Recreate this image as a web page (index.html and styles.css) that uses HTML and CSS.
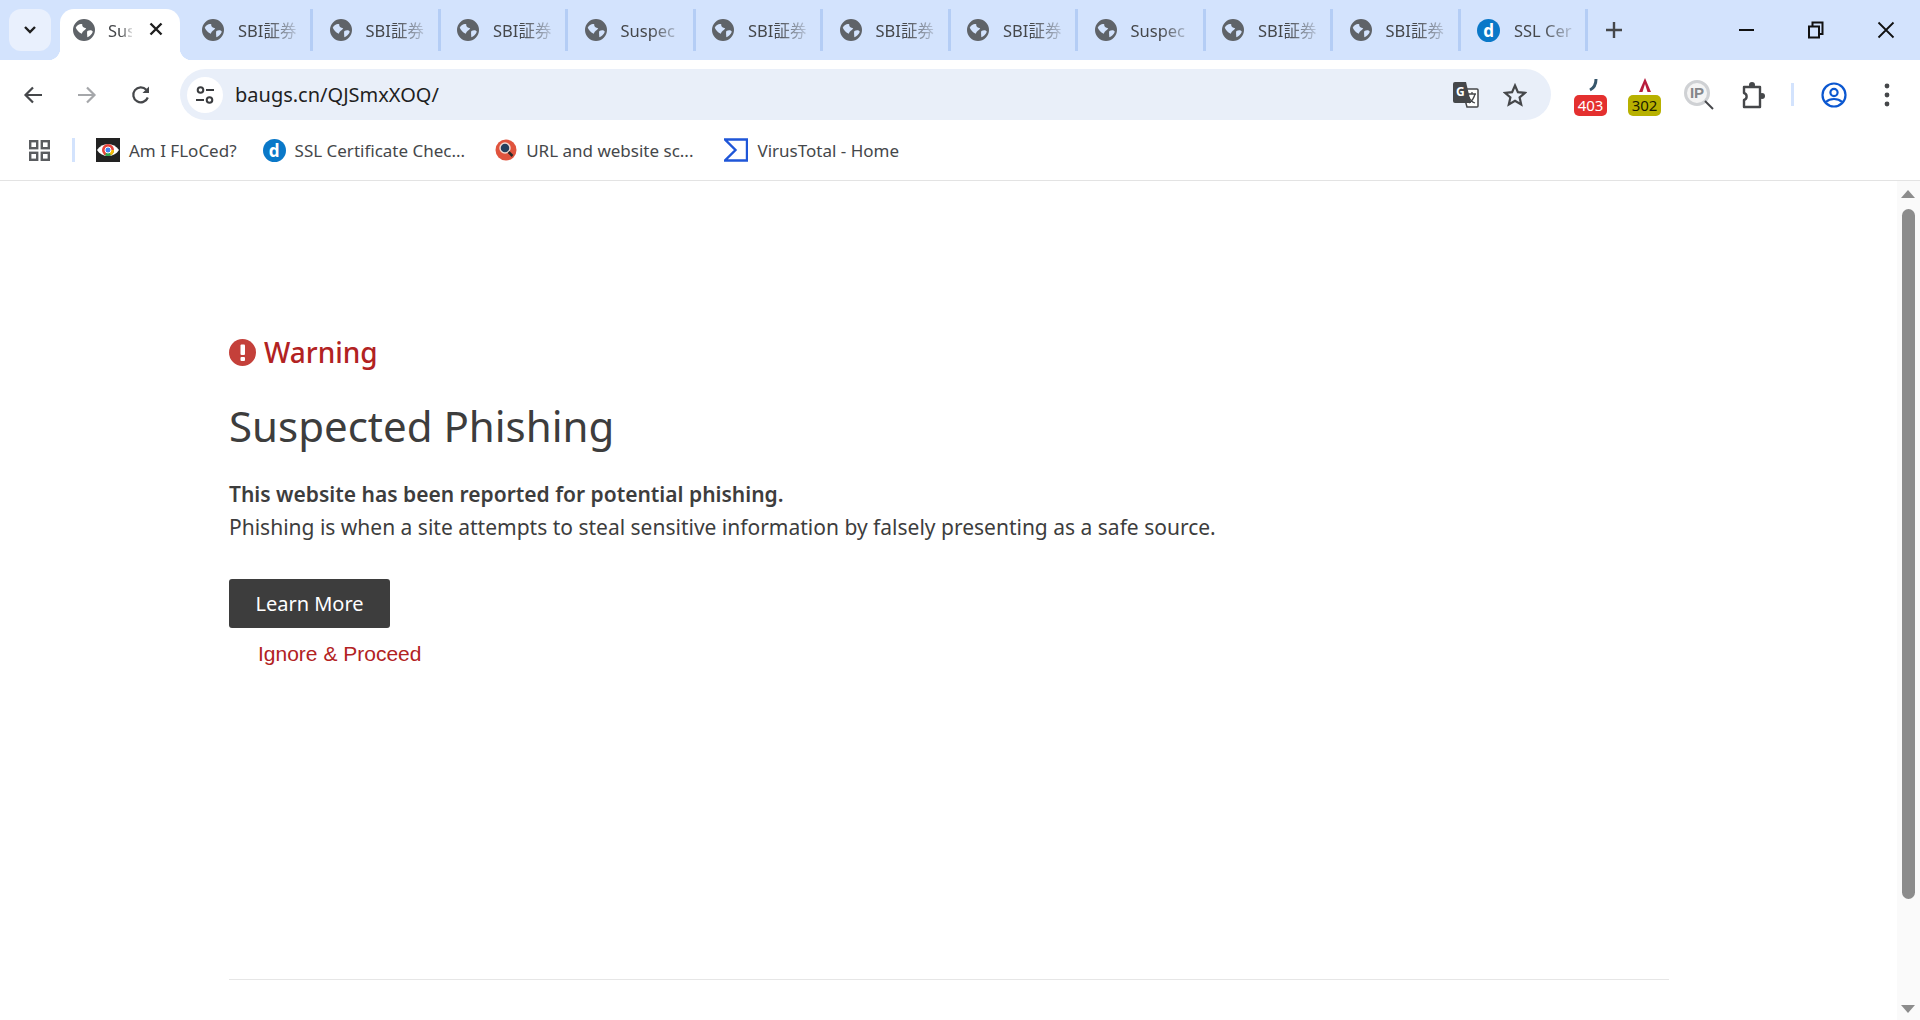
FILE: index.html
```html
<!DOCTYPE html>
<html lang="en">
<head>
    <meta charset="UTF-8">
    <title>Suspected Phishing</title>
    <link rel="stylesheet" href="styles.css">
</head>
<body>

<!-- Shared icons -->
<svg class="defs" width="0" height="0">
    <symbol id="globe" viewBox="0 0 20 20">
        <path fill-rule="evenodd" d="M10 0a10 10 0 1 0 0 20a10 10 0 0 0 0-20zM2.500 8C4 5 7 4 8.500 5C8 7 10 8 12 8.500C11 10.500 8.500 11 8 13.500C5.500 12.500 3.500 10 2.500 8zM13 11C15 10 17 10 18 11.500C17 14 15 16 13 16.500C13 14.500 12.500 13 13 11z"/>
    </symbol>
</svg>

<!-- Tab strip -->
<div class="tabstrip">
    <div class="tab-search">
        <svg width="14" height="10" viewBox="0 0 14 10"><path d="M2 2l5 5 5-5" fill="none" stroke="#1f1f1f" stroke-width="2.400"/></svg>
    </div>
    <div class="tab active">
        <svg class="favicon"><use href="#globe"/></svg>
        <span class="tab-title short">Sus</span>
        <svg class="tab-close" width="14" height="14" viewBox="0 0 14 14"><path d="M1.500 1.500l11 11M12.500 1.500l-11 11" stroke="#1f1f1f" stroke-width="2.400"/></svg>
    </div>
    <div class="tab"><svg class="favicon"><use href="#globe"/></svg><span class="tab-title">SBI証券</span></div>
    <div class="tab"><svg class="favicon"><use href="#globe"/></svg><span class="tab-title">SBI証券</span></div>
    <div class="tab"><svg class="favicon"><use href="#globe"/></svg><span class="tab-title">SBI証券</span></div>
    <div class="tab"><svg class="favicon"><use href="#globe"/></svg><span class="tab-title">Suspec</span></div>
    <div class="tab"><svg class="favicon"><use href="#globe"/></svg><span class="tab-title">SBI証券</span></div>
    <div class="tab"><svg class="favicon"><use href="#globe"/></svg><span class="tab-title">SBI証券</span></div>
    <div class="tab"><svg class="favicon"><use href="#globe"/></svg><span class="tab-title">SBI証券</span></div>
    <div class="tab"><svg class="favicon"><use href="#globe"/></svg><span class="tab-title">Suspec</span></div>
    <div class="tab"><svg class="favicon"><use href="#globe"/></svg><span class="tab-title">SBI証券</span></div>
    <div class="tab"><svg class="favicon"><use href="#globe"/></svg><span class="tab-title">SBI証券</span></div>
    <div class="tab"><span class="d-icon">d</span><span class="tab-title">SSL Cer</span></div>
    <svg class="new-tab" width="18" height="18" viewBox="0 0 18 18"><path d="M9 1v16M1 9h16" stroke="#45474a" stroke-width="2.400"/></svg>
    <div class="window-controls">
        <svg width="16" height="16" viewBox="0 0 16 16"><path d="M0 8h15" stroke="#111" stroke-width="2"/></svg>
        <svg width="16" height="18" viewBox="0 0 16 18"><path d="M1 5.500h10v11H1zM4.500 5V1.500h10V13H11" fill="none" stroke="#111" stroke-width="2"/></svg>
        <svg width="18" height="18" viewBox="0 0 18 18"><path d="M1.500 1.500l15 15M16.500 1.500l-15 15" stroke="#111" stroke-width="1.800"/></svg>
    </div>
</div>

<!-- Toolbar -->
<div class="toolbar">
    <div class="nav-buttons">
        <svg width="20" height="20" viewBox="0 0 20 20"><path d="M19 10H3M10 2.500L2.500 10l7.500 7.500" fill="none" stroke="#45474a" stroke-width="2.200"/></svg>
        <svg width="20" height="20" viewBox="0 0 20 20"><path d="M1 10h16M10 2.500l7.500 7.500-7.500 7.500" fill="none" stroke="#a5a7aa" stroke-width="2.200"/></svg>
        <svg width="20" height="20" viewBox="0 0 20 20"><path d="M16.800 12.500A7.500 7.500 0 1 1 15.300 4.700" fill="none" stroke="#45474a" stroke-width="2.200"/><path d="M18 1.500V8h-6.500z" fill="#45474a"/></svg>
    </div>
    <div class="omnibox">
        <div class="site-info">
            <svg width="20" height="20" viewBox="0 0 20 20" fill="none" stroke="#3a3c3f" stroke-width="2"><circle cx="5.500" cy="5" r="2.800"/><path d="M11 5h8M1 15h8"/><circle cx="14.500" cy="15" r="2.800"/></svg>
        </div>
        <span class="url">baugs.cn/QJSmxXOQ/</span>
        <svg class="translate-icon" width="26" height="26" viewBox="0 0 26 26">
            <path d="M9 7h15a1 1 0 0 1 1 1v16a1 1 0 0 1-1 1H14z" fill="#fff" stroke="#45474a" stroke-width="1.500"/>
            <path d="M2 0h11l5 21H2a2 2 0 0 1-2-2V2a2 2 0 0 1 2-2z" fill="#45474a"/>
            <text x="3" y="14" class="translate-g">G</text>
            <path d="M15 12h8M19 10v2M22 12c-1 4-3 7-6 9M16 15c1 3 3 5 6 6" fill="none" stroke="#45474a" stroke-width="1.300"/>
        </svg>
        <svg class="star-icon" width="24" height="24" viewBox="0 0 24 24"><path d="M12 2.500l2.900 6.600 7.100.7-5.400 4.700 1.600 7-6.200-3.700-6.200 3.700 1.600-7L2 9.800l7.100-.7z" fill="none" stroke="#45474a" stroke-width="2.200"/></svg>
    </div>
    <div class="extensions">
        <div class="ext-badge">
            <svg class="ext-top" width="20" height="14" viewBox="0 0 20 14"><path d="M9 12c4-2 6-6 6-11" fill="none" stroke="#36566b" stroke-width="3"/></svg>
            <span class="badge red">403</span>
        </div>
        <div class="ext-badge">
            <svg class="ext-top" width="20" height="14" viewBox="0 0 20 14"><path d="M10 0l6 14H4z" fill="#b71c3c"/><path d="M10 6l2.500 8h-5z" fill="#fff"/></svg>
            <span class="badge olive">302</span>
        </div>
        <div class="ip-icon">
            <span class="ip-text">IP</span>
            <svg class="ip-glass" width="10" height="10" viewBox="0 0 10 10"><path d="M1 1l8 8" stroke="#45474a" stroke-width="2"/></svg>
        </div>
        <svg class="puzzle" width="26" height="28" viewBox="0 0 26 28"><path d="M3 6h16v20H3v-7c3.500-1 3.500-6 0-7z" fill="none" stroke="#45474a" stroke-width="2.400" stroke-linejoin="round"/><circle cx="11" cy="4" r="3" fill="#45474a"/><circle cx="21" cy="15" r="3" fill="#45474a"/></svg>
        <div class="toolbar-sep"></div>
        <svg class="profile" width="26" height="26" viewBox="0 0 26 26" fill="none" stroke="#0b57d0" stroke-width="2.200"><circle cx="13" cy="13" r="11.500"/><circle cx="13" cy="10.500" r="3.600"/><path d="M5 20c4-4 12-4 16 0"/></svg>
        <svg class="dots" width="6" height="26" viewBox="0 0 6 26" fill="#45474a"><circle cx="3" cy="4" r="2.400"/><circle cx="3" cy="13" r="2.400"/><circle cx="3" cy="22" r="2.400"/></svg>
    </div>
</div>

<!-- Bookmarks bar -->
<div class="bookmarks">
    <svg class="apps" width="21" height="21" viewBox="0 0 21 21" fill="none" stroke="#5a5c5f" stroke-width="2.400"><rect x="1.200" y="1.200" width="7" height="7"/><rect x="12.800" y="1.200" width="7" height="7"/><rect x="1.200" y="12.800" width="7" height="7"/><rect x="12.800" y="12.800" width="7" height="7"/></svg>
    <div class="bookmark-sep"></div>
    <div class="bookmark floc">
        <svg width="24" height="24" viewBox="0 0 24 24"><rect width="24" height="24" fill="#222"/><path d="M1 12c5-8 17-8 22 0-5 8-17 8-22 0z" fill="#fff"/><circle cx="12" cy="12" r="6" fill="#e8453c"/><path d="M12 12l6 0a6 6 0 0 1-9 5.200z" fill="#34a853"/><path d="M12 12h6a6 6 0 0 1-3 5.200z" fill="#fbbc05"/><circle cx="12" cy="12" r="3" fill="#4285f4" stroke="#fff"/></svg>
        <span>Am I FLoCed?</span>
    </div>
    <div class="bookmark ssl">
        <span class="d-icon">d</span>
        <span>SSL Certificate Chec...</span>
    </div>
    <div class="bookmark urlscan">
        <svg width="22" height="24" viewBox="0 0 22 24"><circle cx="11" cy="12" r="10.500" fill="#e0533d"/><circle cx="10" cy="10" r="5" fill="#24405f" stroke="#f2d9d0" stroke-width="1.500"/><path d="M13.500 14l4 4" stroke="#2a2a2a" stroke-width="2.500"/></svg>
        <span>URL and website sc...</span>
    </div>
    <div class="bookmark vt">
        <svg width="24" height="24" viewBox="0 0 24 24"><path d="M1 1.500h22v21H1L11.500 12z" fill="none" stroke="#1f56d8" stroke-width="2.400"/></svg>
        <span>VirusTotal - Home</span>
    </div>
</div>

<!-- Page -->
<div class="viewport">
    <div class="page">
        <div class="warning">
            <svg width="27" height="27" viewBox="0 0 27 27"><circle cx="13.500" cy="13.500" r="13.500" fill="#c4403a"/><rect x="11.500" y="5.500" width="4.500" height="10.500" rx="1" fill="#fff"/><rect x="11.500" y="18" width="4.500" height="4" rx="1" fill="#fff"/></svg>
            <span>Warning</span>
        </div>
        <h1>Suspected Phishing</h1>
        <p class="lead"><strong>This website has been reported for potential phishing.</strong></p>
        <p class="desc">Phishing is when a site attempts to steal sensitive information by falsely presenting as a safe source.</p>
        <button class="learn-more">Learn More</button>
        <a class="proceed" href="#">Ignore &amp; Proceed</a>
        <hr class="rule">
    </div>
    <div class="scrollbar">
        <div class="arrow-up"></div>
        <div class="thumb"></div>
        <div class="arrow-down"></div>
    </div>
</div>

</body>
</html>
```

FILE: styles.css
```css
* {
    box-sizing: border-box;
}
html, body {
    height: 100%;
}
body {
    margin: 0;
    display: flex;
    flex-direction: column;
    overflow: hidden;
    background-color: #ffffff;
    font-family: "Noto Sans", "Noto Sans CJK JP", sans-serif;
    color: #3d3d3d;
}
.defs {
    position: absolute;
}

/* Tab strip */
.tabstrip {
    display: flex;
    align-items: flex-end;
    height: 60px;
    padding-left: 9px;
    background-color: #d3e3fd;
}
.tab-search {
    display: flex;
    align-items: center;
    justify-content: center;
    width: 42px;
    height: 42px;
    margin: 0 9px 9px 0;
    border-radius: 12px;
    background-color: #e9f0fd;
}
.tab {
    display: flex;
    align-items: center;
    flex: none;
    width: 127.5px;
    height: 42px;
    margin-bottom: 9px;
    padding-left: 16.5px;
    border-right: 3px solid #b4cdf5;
}
.tab.active {
    position: relative;
    width: 120px;
    height: 51px;
    margin: 0 5.5px 0 0;
    padding: 0 0 9px 13px;
    border-right: none;
    border-radius: 14px 14px 0 0;
    background-color: #ffffff;
}
.tab.active:before,
.tab.active:after {
    content: '';
    position: absolute;
    bottom: 0;
    width: 12px;
    height: 12px;
}
.tab.active:before {
    left: -12px;
    background: radial-gradient(circle at 0 0, #d3e3fd 12px, #ffffff 12.500px);
}
.tab.active:after {
    right: -12px;
    background: radial-gradient(circle at 100% 0, #d3e3fd 12px, #ffffff 12.500px);
}
.favicon {
    flex: none;
    width: 22px;
    height: 22px;
    fill: #5f6368;
}
.d-icon {
    display: flex;
    flex: none;
    align-items: center;
    justify-content: center;
    width: 23px;
    height: 23px;
    border-radius: 50%;
    background-color: #0a78c8;
    color: #ffffff;
    font-size: 17px;
    font-weight: 700;
    line-height: 1;
}
.tab-title {
    width: 58px;
    margin-left: 14px;
    color: #45474a;
    font-size: 16.500px;
    white-space: nowrap;
    -webkit-mask-image: linear-gradient(to right, #000 50%, rgba(0, 0, 0, 0.2) 100%);
    mask-image: linear-gradient(to right, #000 50%, rgba(0, 0, 0, 0.2) 100%);
}
.tab-title.short {
    width: 24px;
    margin-left: 13px;
}
.tab-close {
    position: absolute;
    top: 13px;
    left: 89px;
}
.new-tab {
    margin: 0 0 21px 17px;
}
.window-controls {
    display: flex;
    align-items: center;
    gap: 53px;
    margin: 0 25px 21px auto;
}

/* Toolbar */
.toolbar {
    display: flex;
    align-items: center;
    flex: none;
    height: 60px;
    padding-top: 9px;
    border-radius: 14px 14px 0 0;
    background-color: #ffffff;
}
.nav-buttons {
    display: flex;
    align-items: center;
    gap: 34px;
    width: 180px;
    padding-left: 23px;
}
.omnibox {
    display: flex;
    align-items: center;
    width: 1371px;
    height: 51px;
    padding: 0 24px 0 7px;
    border-radius: 26px;
    background-color: #e9eff9;
}
.site-info {
    display: flex;
    align-items: center;
    justify-content: center;
    width: 36px;
    height: 36px;
    border-radius: 50%;
    background-color: #ffffff;
}
.url {
    margin-left: 12px;
    color: #1f1f1f;
    font-size: 20px;
}
.translate-icon {
    margin-left: auto;
}
.translate-g {
    fill: #ffffff;
    font-size: 12px;
    font-weight: 700;
}
.star-icon {
    margin-left: 24px;
}
.extensions {
    display: flex;
    align-items: center;
    flex: 1;
    height: 51px;
}
.ext-badge {
    position: relative;
    width: 33px;
    height: 36px;
    margin: 6px 21px 0 0;
}
.ext-badge:first-child {
    margin-left: 23px;
}
.ext-top {
    position: absolute;
    top: -2px;
    left: 7px;
}
.badge {
    position: absolute;
    bottom: 0;
    left: 0;
    width: 33px;
    height: 21px;
    border-radius: 5px;
    font-size: 15px;
    line-height: 21px;
    text-align: center;
}
.badge.red {
    background-color: #e4302f;
    color: #ffffff;
}
.badge.olive {
    background-color: #b8b100;
    color: #1c1c00;
}
.ip-icon {
    position: relative;
    width: 26px;
    height: 26px;
    margin: -3px 0 0 2px;
    border: 3px solid #cfd1d4;
    border-radius: 50%;
    background-color: #f4f4f4;
}
.ip-text {
    display: block;
    color: #85878a;
    font-family: "Liberation Sans", Arial, sans-serif;
    font-size: 15px;
    font-weight: 700;
    line-height: 20px;
    text-align: center;
}
.ip-glass {
    position: absolute;
    right: -7px;
    bottom: -7px;
}
.puzzle {
    margin-left: 31px;
}
.toolbar-sep {
    width: 3px;
    height: 23px;
    margin-left: 24px;
    background-color: #d3e3fd;
}
.profile {
    margin-left: 27px;
}
.dots {
    margin-left: 37px;
}

/* Bookmarks bar */
.bookmarks {
    display: flex;
    align-items: center;
    flex: none;
    height: 61px;
    padding-left: 29px;
    border-bottom: 1px solid #e3e3e3;
    background-color: #ffffff;
}
.bookmark-sep {
    width: 3px;
    height: 24px;
    margin: 0 21px 0 22px;
    background-color: #d3e3fd;
}
.bookmark {
    display: flex;
    align-items: center;
    gap: 9px;
    color: #45474a;
    font-size: 17px;
    white-space: nowrap;
}
.ssl {
    margin-left: 26px;
}
.urlscan {
    margin-left: 30px;
}
.vt {
    margin-left: 31px;
}

/* Page */
.viewport {
    display: flex;
    flex: 1;
    min-height: 0;
}
.page {
    flex: 1;
    padding: 0 228px 0 229px;
}
.warning {
    display: flex;
    align-items: center;
    gap: 8px;
    margin-top: 153px;
    color: #b22222;
    font-size: 28px;
    font-weight: 500;
    line-height: 36px;
}
h1 {
    margin: 26px 0 0;
    font-size: 42px;
    font-weight: 400;
    line-height: 60px;
}
.lead,
.desc {
    margin: 0;
    font-size: 21px;
    line-height: 33px;
}
.lead strong {
    font-weight: 600;
}
.lead {
    margin-top: 22px;
}
.learn-more {
    display: block;
    width: 161px;
    height: 49px;
    margin-top: 35px;
    border: none;
    border-radius: 3px;
    background-color: #3d3d3d;
    color: #ffffff;
    font-family: inherit;
    font-size: 20px;
}
.proceed {
    display: block;
    margin: 13px 0 0 29px;
    color: #b22222;
    font-family: "Liberation Sans", Arial, sans-serif;
    font-size: 21px;
    line-height: 26px;
    text-decoration: none;
}
.rule {
    margin: 312px 0 0;
    border: none;
    border-top: 1px solid #e6e6e6;
}

/* Scrollbar */
.scrollbar {
    position: relative;
    flex: none;
    width: 23px;
    background-color: #fafafa;
}
.thumb {
    position: absolute;
    top: 28px;
    left: 5px;
    width: 13px;
    height: 690px;
    border-radius: 7px;
    background-color: #8c8c8c;
}
.arrow-up,
.arrow-down {
    position: absolute;
    left: 4px;
    width: 0;
    height: 0;
    border-left: 7.500px solid transparent;
    border-right: 7.500px solid transparent;
}
.arrow-up {
    top: 9px;
    border-bottom: 8px solid #8c8c8c;
}
.arrow-down {
    bottom: 7px;
    border-top: 8px solid #8c8c8c;
}
```
